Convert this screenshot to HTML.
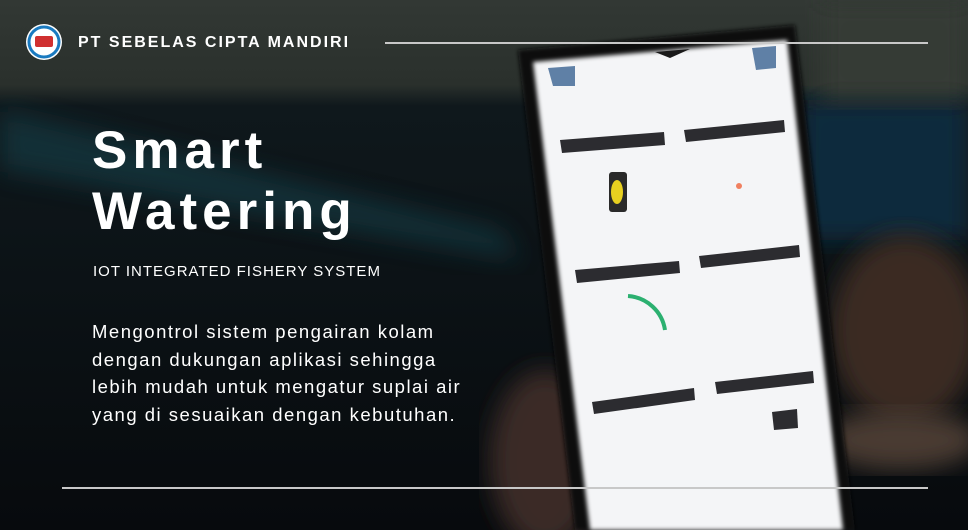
<!DOCTYPE html>
<html><head><style>
html,body{margin:0;padding:0}
body{width:968px;height:530px;overflow:hidden;position:relative;background:#0d1418;font-family:"Liberation Sans",sans-serif}
.t{position:absolute;color:#fff}
</style></head><body>
<svg width="968" height="530" style="position:absolute;left:0;top:0">
<defs>
<linearGradient id="bg" x1="0" y1="0" x2="0" y2="1">
<stop offset="0" stop-color="#323834"/><stop offset="0.16" stop-color="#2a302c"/><stop offset="0.2" stop-color="#0f181c"/><stop offset="1" stop-color="#070a0d"/>
</linearGradient>
<filter id="bl"><feGaussianBlur stdDeviation="12"/></filter>
<filter id="b2"><feGaussianBlur stdDeviation="2"/></filter>
</defs>
<rect width="968" height="530" fill="url(#bg)"/>
<polygon points="0,110 500,230 520,260 0,170" fill="#17414a" opacity="0.6" filter="url(#bl)"/>
<rect x="800" y="100" width="168" height="140" fill="#0d2a3c" filter="url(#bl)"/>
<rect x="820" y="0" width="148" height="100" fill="#343a36" filter="url(#bl)"/>
<ellipse cx="905" cy="330" rx="75" ry="95" fill="#3a2a22" filter="url(#bl)"/>
<ellipse cx="900" cy="440" rx="80" ry="30" fill="#4a3a32" filter="url(#bl)"/>
<ellipse cx="545" cy="460" rx="55" ry="90" fill="#3a2c26" filter="url(#bl)"/>
<polygon points="518,50 795,25 855,530 575,530" fill="#0b0b0d" filter="url(#b2)"/>
<polygon points="533,62 787,40 843,530 590,530" fill="#f4f5f7" filter="url(#b2)"/>
<polygon points="548,68 575,66 575,86 553,86" fill="#5f80a6"/>
<polygon points="752,48 776,46 776,68 756,70" fill="#5f80a6"/>
<polygon points="655,52 690,49 670,58" fill="#1a1a1a"/>
<g fill="#2c2c30">
<polygon points="560,140 664,132 665,145 562,153"/>
<polygon points="684,130 784,120 785,132 686,142"/>
<polygon points="575,270 679,261 680,273 577,283"/>
<polygon points="699,256 799,245 800,257 701,268"/>
<polygon points="592,402 694,388 695,400 594,414"/>
<polygon points="715,382 813,371 814,383 717,394"/>
<polygon points="772,412 797,409 798,428 774,430"/>
</g>
<rect x="609" y="172" width="18" height="40" rx="3" fill="#2a2a2a"/>
<ellipse cx="617" cy="192" rx="6" ry="12" fill="#e8d020"/>
<circle cx="739" cy="186" r="3" fill="#f08060"/>
<path d="M628 296 A40 40 0 0 1 665 330" stroke="#2bb070" stroke-width="4" fill="none"/>
<line x1="385" y1="43" x2="928" y2="43" stroke="#c8c8c8" stroke-width="2"/>
<line x1="62" y1="488" x2="928" y2="488" stroke="#c8c8c8" stroke-width="2"/>
<circle cx="44" cy="42" r="18" fill="#fff"/>
<circle cx="44" cy="42" r="15" fill="none" stroke="#1a7ac0" stroke-width="3"/>
<rect x="35" y="36" width="18" height="11" rx="2" fill="#d03030"/>
</svg>
<div class="t" style="left:78px;top:34px;font-size:16px;font-weight:bold;letter-spacing:2px">PT SEBELAS CIPTA MANDIRI</div>
<div class="t" style="left:92px;top:120px;font-size:53px;font-weight:bold;line-height:61px;letter-spacing:5px">Smart<br>Watering</div>
<div class="t" style="left:93px;top:263px;font-size:15px;letter-spacing:1px">IOT INTEGRATED FISHERY SYSTEM</div>
<div class="t" style="left:92px;top:318px;font-size:18.5px;line-height:27.5px;letter-spacing:1.5px">Mengontrol sistem pengairan kolam<br>dengan dukungan aplikasi sehingga<br>lebih mudah untuk mengatur suplai air<br>yang di sesuaikan dengan kebutuhan.</div>
</body></html>
